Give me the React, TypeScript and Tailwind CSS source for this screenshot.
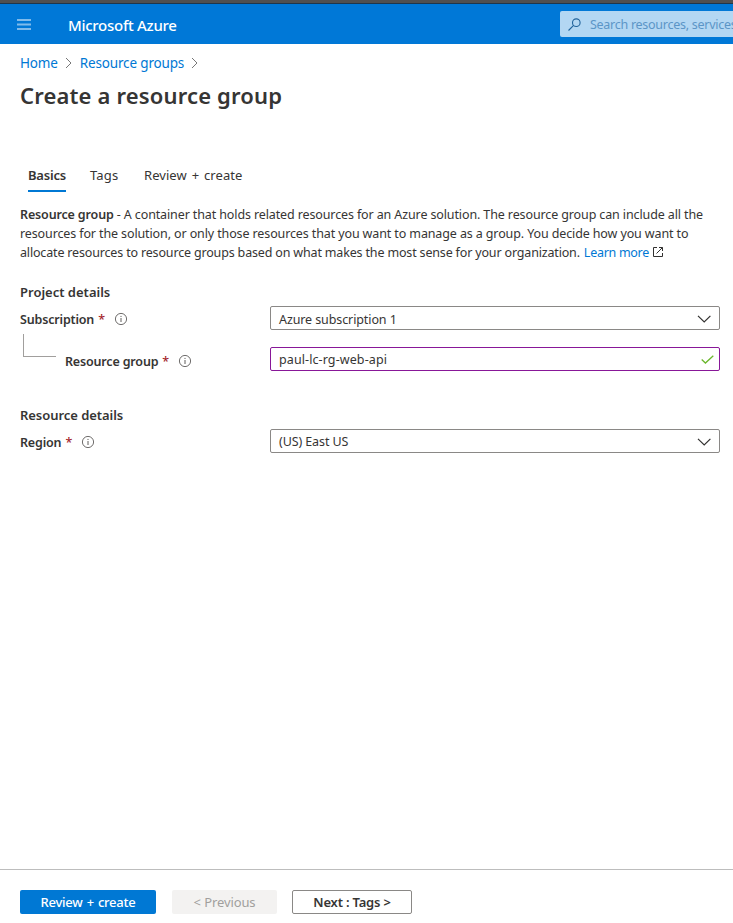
import type { ReactNode } from "react";

function Info() {
  return (
    <svg width="14" height="14" viewBox="0 0 14 14" fill="none" className="shrink-0" stroke="#605e5c">
      <circle cx="7" cy="7" r="5.6" strokeWidth="0.9" />
      <path d="M7 6v4M7 3.9v1.1" strokeWidth="1" />
    </svg>
  );
}

function Crumb() {
  return (
    <svg width="8" height="12" viewBox="0 0 8 12" fill="none" className="shrink-0" stroke="#777" strokeWidth="1">
      <path d="M1 1l5 5-5 5" />
    </svg>
  );
}

function Select({ children }: { children: ReactNode }) {
  return (
    <div className="flex h-6 w-[450px] items-center justify-between rounded-[2px] border border-[#8a8886] pr-2 pl-2 tracking-[-0.1px]">
      {children}
      <svg width="14" height="8" viewBox="0 0 14 8" fill="none" className="relative top-px" stroke="#323130" strokeWidth="1.2">
        <path d="M1 0.800L7.200 7l6.200-6.200" />
      </svg>
    </div>
  );
}

function Label({ text }: { text: string }) {
  return (
    <div className="flex items-center font-semibold">
      <span className="tracking-[-0.17px]">{text}</span>
      <span className="ml-1 font-medium text-[#a4262c]">*</span>
      <span className="relative -top-px ml-[8.500px]"><Info /></span>
    </div>
  );
}

export default function App() {
  return (
    <div className="flex h-[923px] w-[733px] flex-col overflow-hidden bg-white font-['Noto_Sans',sans-serif] text-[12.500px] leading-[19px] whitespace-nowrap text-[#363534]">
      <div className="h-1 shrink-0 border-b border-[#20364a] bg-[#505050]" />
      <header className="flex h-10 shrink-0 items-center bg-[#0078d7] pl-[17px]">
        <svg width="14" height="11" viewBox="0 0 14 11" fill="#80bbeb" className="shrink-0">
          <path d="M0 0h14v2H0zM0 4.500h14v2H0zM0 9h14v2H0z" />
        </svg>
        <span className="relative top-px ml-[37px] w-[492px] shrink-0 text-[15px] font-medium tracking-[-0.28px] text-white">Microsoft Azure</span>
        <div className="flex h-[26px] w-[200px] shrink-0 items-center rounded-[2px] bg-[#b3d7f3] pl-2 text-[#5b95c7]">
          <svg width="13" height="13" viewBox="0 0 13 13" fill="none" className="shrink-0" stroke="#20639b" strokeWidth="1.1">
            <circle cx="8.300" cy="4.700" r="3.800" />
            <path d="M5.600 7.400L0.500 12.500" />
          </svg>
          <span className="ml-[9px] tracking-[-0.27px]">Search resources, services</span>
        </div>
      </header>
      <nav className="mt-[9px] flex h-5 shrink-0 items-center pl-5 text-[13.500px] tracking-[-0.16px] text-[#0078d4]">
        <span>Home</span>
        <span className="mr-[6.500px] ml-[7.500px]"><Crumb /></span>
        <span>Resource groups</span>
        <span className="ml-[6.500px]"><Crumb /></span>
      </nav>
      <h1 className="mt-1.5 h-8 shrink-0 pl-5 text-[22px] leading-8 font-semibold tracking-[0.16px]">Create a resource group</h1>
      <div className="mt-[55px] flex h-[26px] shrink-0 pl-7 text-[13px]">
        <span className="w-[38px] border-b-2 border-[#0078d4] font-semibold tracking-[-0.2px]">Basics</span>
        <span className="ml-6 w-[54px] tracking-[0.15px]">Tags</span>
        <span className="tracking-[0.05px] [word-spacing:1.500px]">Review + create</span>
      </div>
      <p className="mt-[13px] shrink-0 pl-5">
        <span className="block tracking-[-0.120px]"><b className="font-semibold tracking-[-0.15px]">Resource group</b> - A container that holds related resources for an Azure solution. The resource group can include all the</span>
        <span className="block tracking-[-0.12px]">resources for the solution, or only those resources that you want to manage as a group. You decide how you want to</span>
        <span className="flex items-center tracking-[-0.165px]">
          <span>allocate resources to resource groups based on what makes the most sense for your organization.</span>
          <span className="ml-1 tracking-[-0.28px] text-[#0078d4]">Learn more</span>
          <svg width="12" height="12" viewBox="0 0 12 12" fill="none" className="relative -top-px ml-[3px]" stroke="#323130">
            <path d="M5 1.500H1.500v9h9V7M7 1.500h3.500V5M10.500 1.500L4.500 7.500" />
          </svg>
        </span>
      </p>
      <h2 className="mt-[21px] h-5 shrink-0 pl-5 text-[13px] font-semibold">Project details</h2>
      <div className="mt-[3px] flex h-6 shrink-0 items-center pl-5">
        <div className="w-[250px] shrink-0 pt-[3px]"><Label text="Subscription" /></div>
        <Select><span className="relative top-px">Azure subscription 1</span></Select>
      </div>
      <div className="mt-1 flex h-10 shrink-0 pl-[23px]">
        <div className="h-[23px] w-[33px] shrink-0 border-b border-l border-[#a19f9d]" />
        <div className="w-[214px] shrink-0 pt-[18px] pl-[9px]"><Label text="Resource group" /></div>
        <div className="mt-[13px] flex h-6 w-[450px] shrink-0 items-center justify-between rounded-[2px] border border-[#881798] pr-[5px] pl-2">
          <span className="tracking-[0.1px]">paul-lc-rg-web-api</span>
          <svg width="13" height="9" viewBox="0 0 13 9" fill="none" stroke="#6bb72c" strokeWidth="1.300">
            <path d="M0.700 4.500L4.400 8 12.300 0.700" />
          </svg>
        </div>
      </div>
      <h2 className="mt-8 h-5 shrink-0 pl-5 text-[13px] font-semibold tracking-[-0.05px]">Resource details</h2>
      <div className="mt-[3px] flex h-6 shrink-0 items-center pl-5">
        <div className="w-[250px] shrink-0 pt-[3px]"><Label text="Region" /></div>
        <Select><span>(US) East US</span></Select>
      </div>
      <footer className="mt-auto flex h-[54px] shrink-0 border-t border-[#bdbdbd] pt-5 pl-5 text-[13px]">
        <button className="h-6 w-[136px] rounded-[2px] bg-[#0078d4] font-medium tracking-[-0.25px] text-white [word-spacing:1px]">Review + create</button>
        <button className="ml-4 h-6 w-[105px] rounded-[2px] bg-[#f3f2f1] tracking-[-0.1px] text-[#a19f9d]">&lt; Previous</button>
        <button className="ml-[15px] h-6 w-[120px] rounded-[2px] border border-[#8a8886] font-semibold tracking-[-0.2px]">Next : Tags &gt;</button>
      </footer>
    </div>
  );
}
